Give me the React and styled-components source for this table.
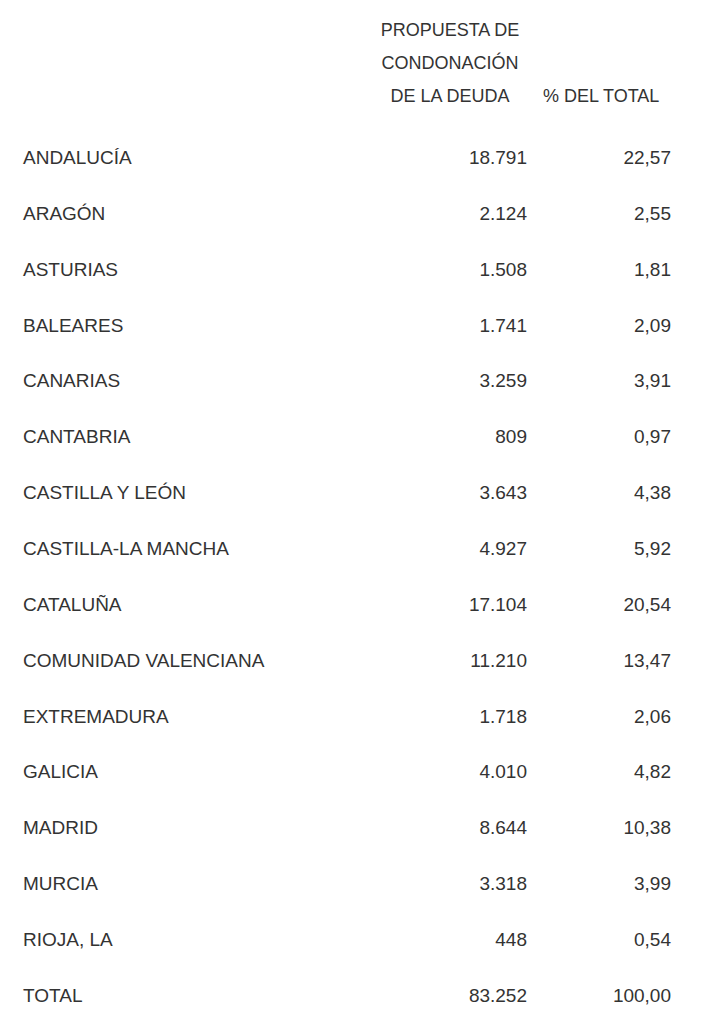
import React from 'react'
import styled, { createGlobalStyle } from 'styled-components'

const GlobalStyle = createGlobalStyle`
  body {
    margin: 0;
    background: #ffffff;
    font-family: "Liberation Sans", Arial, sans-serif;
    color: #333333;
  }
`

const Table = styled.table`
  border-collapse: collapse;
  table-layout: fixed;
  width: 679px;
  font-size: 19px;
`

const Col = styled.col`
  width: ${({ $w }) => $w};
`

const HeadCell = styled.th`
  box-sizing: border-box;
  font-weight: 400;
  font-size: 18px;
  line-height: 33px;
  padding: 14px 8px 17px;
  vertical-align: bottom;
  text-align: ${({ $align }) => $align || 'left'};
  white-space: nowrap;
`

const Row = styled.tr`
  height: 55.87px;
`

const Cell = styled.td`
  box-sizing: border-box;
  padding: 0 8px;
  line-height: 24px;
  vertical-align: middle;
  text-align: ${({ $num }) => ($num ? 'right' : 'left')};
  white-space: nowrap;
  &:first-child {
    padding-left: 23px;
  }
`

const rows = [
  ['ANDALUCÍA', '18.791', '22,57'],
  ['ARAGÓN', '2.124', '2,55'],
  ['ASTURIAS', '1.508', '1,81'],
  ['BALEARES', '1.741', '2,09'],
  ['CANARIAS', '3.259', '3,91'],
  ['CANTABRIA', '809', '0,97'],
  ['CASTILLA Y LEÓN', '3.643', '4,38'],
  ['CASTILLA-LA MANCHA', '4.927', '5,92'],
  ['CATALUÑA', '17.104', '20,54'],
  ['COMUNIDAD VALENCIANA', '11.210', '13,47'],
  ['EXTREMADURA', '1.718', '2,06'],
  ['GALICIA', '4.010', '4,82'],
  ['MADRID', '8.644', '10,38'],
  ['MURCIA', '3.318', '3,99'],
  ['RIOJA, LA', '448', '0,54'],
  ['TOTAL', '83.252', '100,00'],
]

export default function App() {
  return (
    <>
      <GlobalStyle />
      <Table>
        <colgroup>
          <Col $w="365px" />
          <Col $w="170px" />
          <Col $w="144px" />
        </colgroup>
        <thead>
          <tr>
            <HeadCell></HeadCell>
            <HeadCell $align="center">
              PROPUESTA DE<br />CONDONACIÓN<br />DE LA DEUDA
            </HeadCell>
            <HeadCell>% DEL TOTAL</HeadCell>
          </tr>
        </thead>
        <tbody>
          {rows.map(([name, amount, pct]) => (
            <Row key={name}>
              <Cell>{name}</Cell>
              <Cell $num>{amount}</Cell>
              <Cell $num>{pct}</Cell>
            </Row>
          ))}
        </tbody>
      </Table>
    </>
  )
}
